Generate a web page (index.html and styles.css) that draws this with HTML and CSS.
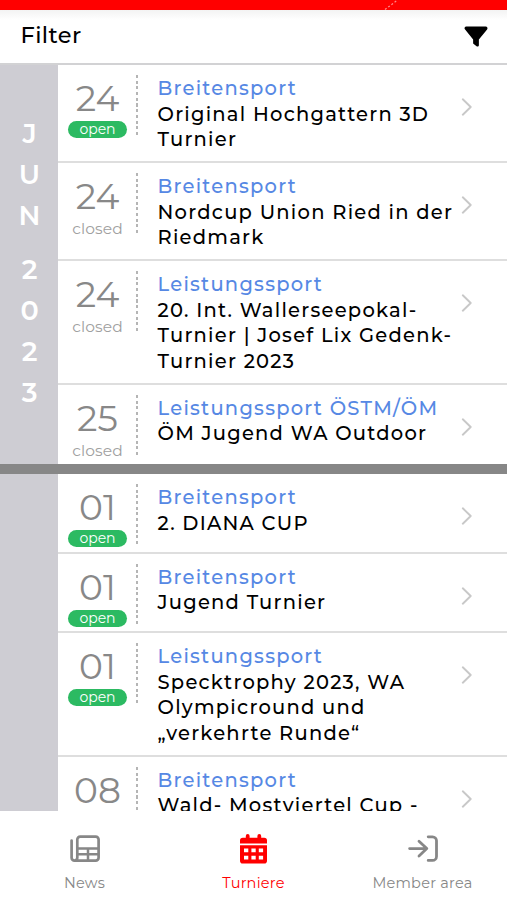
FILE: index.html
```html
<!DOCTYPE html>
<html lang="de">
<head>
<meta charset="utf-8">
<meta name="viewport" content="width=device-width, initial-scale=1">
<title>Turniere</title>
<link rel="stylesheet" href="styles.css">
</head>
<body>
<svg class="defs" width="0" height="0" aria-hidden="true">
  <symbol id="chevron" viewBox="0 0 12 18"><path d="M1.800 1.300 9.700 9l-7.900 7.700" fill="none" stroke="currentColor" stroke-width="1.900" stroke-linecap="round" stroke-linejoin="round"/></symbol>
</svg>
<div class="app">
  <div class="topbar"><svg viewBox="0 0 14 10"><path d="M1 9.500 13 .5" fill="none" stroke="#ff8a8a" stroke-width="1.200" stroke-dasharray="2 2"/></svg></div>
  <header class="filter">
    <span>Filter</span>
    <svg class="funnel" viewBox="0 0 512 512"><path d="M3.900 54.900C10.500 40.900 24.500 32 40 32h432c15.500 0 29.500 8.900 36.100 22.900s4.600 30.500-5.200 42.500L320 320.900V448c0 12.100-6.800 23.200-17.700 28.600s-23.800 4.300-33.500-3l-64-48c-8.100-6-12.800-15.500-12.800-25.600v-79.100L9 97.300C-.7 85.400-2.800 68.800 3.900 54.900z"/></svg>
  </header>
  <main class="content">
    <section class="month june">
      <aside class="rail"><span>J</span><span>U</span><span>N</span><span class="year">2</span><span>0</span><span>2</span><span>3</span></aside>
      <div class="events">
        <article class="event">
          <div class="date"><b>24</b><span class="open">open</span></div>
          <div class="info"><p class="cat">Breitensport</p><p>Original Hochgattern 3D<br>Turnier</p></div>
          <svg class="chev"><use href="#chevron"/></svg>
        </article>
        <article class="event">
          <div class="date"><b>24</b><span class="closed">closed</span></div>
          <div class="info"><p class="cat">Breitensport</p><p>Nordcup Union Ried in der<br>Riedmark</p></div>
          <svg class="chev"><use href="#chevron"/></svg>
        </article>
        <article class="event">
          <div class="date"><b>24</b><span class="closed">closed</span></div>
          <div class="info"><p class="cat">Leistungssport</p><p>20. Int. Wallerseepokal-<br>Turnier | Josef Lix Gedenk-<br>Turnier 2023</p></div>
          <svg class="chev"><use href="#chevron"/></svg>
        </article>
        <article class="event">
          <div class="date"><b>25</b><span class="closed">closed</span></div>
          <div class="info"><p class="cat">Leistungssport ÖSTM/ÖM</p><p>ÖM Jugend WA Outdoor</p></div>
          <svg class="chev"><use href="#chevron"/></svg>
        </article>
      </div>
    </section>
    <section class="month july">
      <aside class="rail"></aside>
      <div class="events">
        <article class="event">
          <div class="date"><b>01</b><span class="open">open</span></div>
          <div class="info"><p class="cat">Breitensport</p><p>2. DIANA CUP</p></div>
          <svg class="chev"><use href="#chevron"/></svg>
        </article>
        <article class="event">
          <div class="date"><b>01</b><span class="open">open</span></div>
          <div class="info"><p class="cat">Breitensport</p><p>Jugend Turnier</p></div>
          <svg class="chev"><use href="#chevron"/></svg>
        </article>
        <article class="event">
          <div class="date"><b>01</b><span class="open">open</span></div>
          <div class="info"><p class="cat">Leistungssport</p><p>Specktrophy 2023, WA<br>Olympicround und<br>„verkehrte Runde“</p></div>
          <svg class="chev"><use href="#chevron"/></svg>
        </article>
        <article class="event">
          <div class="date"><b>08</b></div>
          <div class="info"><p class="cat">Breitensport</p><p>Wald- Mostviertel Cup -</p></div>
          <svg class="chev"><use href="#chevron"/></svg>
        </article>
      </div>
    </section>
  </main>
  <nav class="tabs">
    <a class="tab">
      <svg viewBox="0 0 30 28"><g fill="none" stroke="currentColor" stroke-width="2.700" stroke-linecap="round" stroke-linejoin="round"><path d="M1.600 5.500v17.200a2.900 2.900 0 0 0 2.900 2.900h21.200a2.900 2.900 0 0 0 2.900-2.900V4.500a2.900 2.900 0 0 0-2.900-2.900H10.200a2.900 2.900 0 0 0-2.900 2.900v18.200a2.900 2.900 0 0 1-2.900 2.900"/><path d="M8 13.500h20M8 19.300h20M18 14v11" stroke-width="2.500"/></g></svg>
      <span>News</span>
    </a>
    <a class="tab active">
      <svg class="cal" viewBox="0 0 27 30"><path fill="currentColor" fill-rule="evenodd" d="M7.700 0a1.900 1.900 0 0 1 1.900 1.900v1.900h7.800V1.900a1.900 1.900 0 0 1 3.800 0v1.900h3a2.800 2.800 0 0 1 2.800 2.800v2.800H0V6.600a2.800 2.800 0 0 1 2.800-2.800h3V1.900A1.900 1.900 0 0 1 7.700 0zM0 11.200h27v15.600a2.800 2.800 0 0 1-2.800 2.800H2.800A2.800 2.800 0 0 1 0 26.800zM4 14.500v3.800h4.300v-3.800zM11.400 14.500v3.800h4.300v-3.800zM18.800 14.500v3.800h4.300v-3.800zM4 21.700v3.800h4.300v-3.800zM11.400 21.700v3.800h4.300v-3.800zM18.800 21.700v3.800h4.300v-3.800z"/></svg>
      <span>Turniere</span>
    </a>
    <a class="tab">
      <svg viewBox="0 0 30 28"><g fill="none" stroke="currentColor" stroke-width="2.800" stroke-linecap="round" stroke-linejoin="round"><path d="M1.600 13.600h16.600M11 6.200l7.800 7.400-7.800 7.400M20.200 1.800h4.300a4 4 0 0 1 4 4v15.600a4 4 0 0 1-4 4h-4.300"/></g></svg>
      <span>Member area</span>
    </a>
  </nav>
</div>
</body>
</html>
```

FILE: styles.css
```css
* { box-sizing: border-box; }
body { margin: 0; background: #fff; font-family: Montserrat, Inter, sans-serif; color: #000; }
p { margin: 0; }
.defs { display: block; }
.app { display: flex; flex-direction: column; width: 507px; height: 900px; overflow: hidden; }
.topbar { flex: none; height: 10px; background: #f00; padding-left: 384px; }
.topbar svg { display: block; width: 14px; height: 10px; }
.filter { flex: none; height: 55px; display: flex; justify-content: space-between; align-items: center; padding: 0 19px 3px 20.500px; border-bottom: 2px solid #d2d2d4; background: linear-gradient(#f3f3f3, #fff 10px); font-size: 22.500px; font-weight: 500; letter-spacing: .4px; }
.funnel { width: 24px; height: 23px; margin-top: 3px; }
.content { flex: 1; min-height: 0; overflow: hidden; }
.month { display: flex; }
.june { height: 409px; border-bottom: 10px solid #878787; }
.july { height: 346px; }
.rail { width: 58px; flex: none; background: #cecdd3; display: flex; flex-direction: column; align-items: center; padding-top: 48px; color: #fff; font-size: 27px; line-height: 41px; font-weight: 600; }
.rail span { padding-left: 1px; }
.rail .year { margin-top: 13px; }
.events { flex: 1; min-width: 0; overflow: hidden; }
.event { display: flex; align-items: flex-start; padding: 10px 34px 7.500px 10px; border-bottom: 2px solid #dedede; }
.event:last-child { border-bottom: 0; }
.date { width: 70px; height: 60px; flex: none; padding-right: 11px; display: flex; flex-direction: column; align-items: center; background: repeating-linear-gradient(#b5b5b5 0 3px, transparent 3px 5.700px) right / 2px 100% no-repeat; color: #888; }
.date b { font-size: 36px; line-height: 46px; font-weight: 400; }
.open, .closed { font-size: 14px; line-height: 17px; }
.open { width: 59px; height: 17px; border-radius: 9px; background: #2cba62; color: #fff; text-align: center; }
.closed { color: #a0a0a0; font-size: 15.500px; letter-spacing: .1px; margin-top: 1px; }
.info { flex: 1; margin-left: 19.500px; padding: 1px 0 .4px; font-size: 19.500px; line-height: 25.700px; font-weight: 500; letter-spacing: 1.250px; white-space: nowrap; }
.cat { color: #5688e4; }
.chev { flex: none; width: 12px; height: 18px; margin-top: 23px; color: #c8c8c8; }
.tabs { flex: none; height: 89px; display: grid; grid-template-columns: repeat(3, 1fr); background: #fff; }
.tab { display: flex; flex-direction: column; align-items: center; color: #878787; font-size: 14.500px; font-weight: 400; letter-spacing: .25px; }
.tab svg { width: 30px; height: 28px; margin-top: 24px; }
.tab span { line-height: 20px; margin-top: 10px; }
.tab.active { color: #f00; }
.tab .cal { width: 27px; height: 30px; margin: 23px 0 -1px; }
```
